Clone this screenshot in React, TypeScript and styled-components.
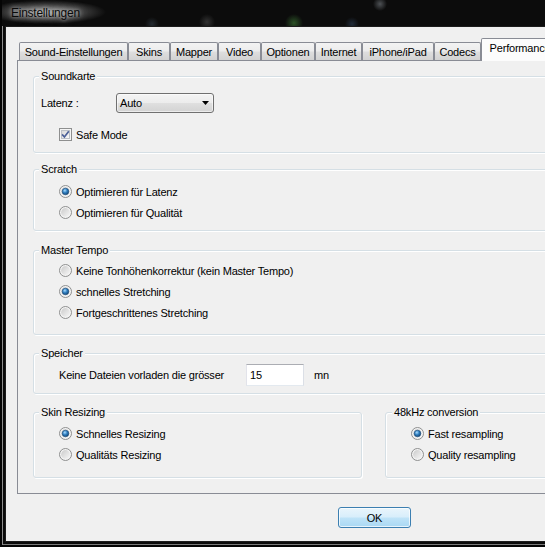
import { useId } from "react";
import styled, { createGlobalStyle } from "styled-components";

const GlobalStyle = createGlobalStyle`
  html, body {
    margin: 0;
    padding: 0;
    background: #000;
    overflow: hidden;
  }
  body {
    font-family: "Liberation Sans", Arial, sans-serif;
    font-size: 11px;
    letter-spacing: -0.2px;
    color: #000;
  }
`;

const Window = styled.div`
  box-sizing: border-box;
  width: 600px;
  height: 547px;
  display: flex;
  flex-direction: column;
  padding: 0 3px 3px;
  border: 2px solid #050505;
  border-top: none;
  background: #0b0b0b;
  box-shadow: inset 1px 0 0 #8d8d8d, inset 0 -1px 0 #7a7a7a;
`;

const TitleBar = styled.div`
  height: 25px;
  flex-shrink: 0;
  display: flex;
  align-items: center;
  padding: 0 0 1px 3px;
  margin: 0 -3px;
  background:
    radial-gradient(ellipse 60px 12px at 44px 12px, rgba(175, 175, 175, 0.9), rgba(110, 110, 110, 0.45) 65%, transparent 100%),
    radial-gradient(circle at 292px 23px, rgba(70, 140, 60, 0.55), transparent 9px),
    radial-gradient(circle at 205px 22px, rgba(120, 120, 120, 0.35), transparent 8px),
    radial-gradient(circle at 378px 4px, rgba(200, 210, 220, 0.35), transparent 7px),
    radial-gradient(circle at 150px 24px, rgba(90, 110, 130, 0.3), transparent 7px),
    radial-gradient(circle at 350px 24px, rgba(70, 100, 140, 0.35), transparent 7px),
    #0c0c0c;
`;

const Title = styled.span`
  padding-left: 6px;
  font-size: 12px;
  letter-spacing: -0.25px;
  color: #0a0a0a;
  text-shadow: 0 0 4px rgba(230, 230, 230, 0.8), 0 0 8px rgba(200, 200, 200, 0.6);
`;

const Client = styled.div`
  flex: 1;
  display: flex;
  flex-direction: column;
  min-height: 0;
  background: #f0f0f0;
  border: 1px solid #1c1c1c;
  padding: 11px 11px 0;
`;

const TabRow = styled.div`
  display: flex;
  align-items: flex-start;
  height: 23px;
  padding-left: 2px;
  position: relative;
  z-index: 1;
`;

const Tab = styled.div<{ $active?: boolean; $w: number }>`
  box-sizing: border-box;
  flex-shrink: 0;
  width: ${(p) => p.$w}px;
  height: ${(p) => (p.$active ? 23 : 18)}px;
  margin-top: ${(p) => (p.$active ? 0 : 4)}px;
  padding-bottom: ${(p) => (p.$active ? 4 : 0)}px;
  display: flex;
  align-items: center;
  justify-content: center;
  white-space: nowrap;
  border: 1px solid #898c95;
  border-bottom: none;
  border-radius: 2px 2px 0 0;
  background: ${(p) =>
    p.$active
      ? "#fcfcfc"
      : "linear-gradient(#f3f3f3 0%, #ececec 48%, #dedede 52%, #d2d2d2 100%)"};
`;

const Panel = styled.div`
  margin-top: -1px;
  border: 1px solid #898c95;
  background: #f0f0f0;
  padding: 15px 15px 15px;
  display: flex;
  flex-direction: column;
`;

const Group = styled.div<{ $h: number; $mt?: number }>`
  box-sizing: border-box;
  height: ${(p) => p.$h}px;
  margin-top: ${(p) => p.$mt ?? 0}px;
  border: 1px solid #d5dfe5;
  border-radius: 3px;
  box-shadow: inset 1px 1px 0 #fff, 1px 1px 0 #fff;
  display: flex;
  flex-direction: column;
  align-items: flex-start;
`;

const Legend = styled.span<{ $ml?: number }>`
  margin: -7px 0 0 ${(p) => p.$ml ?? 5}px;
  padding: 0 2px;
  line-height: 13px;
  background: #f0f0f0;
`;

const GroupRow = styled.div<{ $mt: number }>`
  display: grid;
  grid-template-columns: 329px 1fr;
  column-gap: 23px;
  margin-top: ${(p) => p.$mt}px;
`;

const OptionList = styled.div<{ $pt: number }>`
  display: flex;
  flex-direction: column;
  padding: ${(p) => p.$pt}px 0 0 25px;
`;

const OptionRow = styled.div`
  display: flex;
  align-items: center;
  gap: 4px;
  height: 21px;
  white-space: nowrap;
`;

const FieldRow = styled.div<{ $mt: number; $pl: number; $h: number }>`
  display: flex;
  align-items: center;
  gap: ${(p) => (p.$pl === 25 && p.$h === 21 ? 4 : 0)}px;
  height: ${(p) => p.$h}px;
  margin-top: ${(p) => p.$mt}px;
  padding-left: ${(p) => p.$pl}px;
  white-space: nowrap;
`;

const FieldLabel = styled.span<{ $w: number }>`
  width: ${(p) => p.$w}px;
  overflow: hidden;
  flex-shrink: 0;
`;

const Combo = styled.div`
  box-sizing: border-box;
  width: 98px;
  height: 20px;
  display: flex;
  align-items: center;
  justify-content: space-between;
  padding: 0 4px 0 3px;
  border: 1px solid #707070;
  border-radius: 3px;
  background: linear-gradient(#f4f4f4 0%, #ececec 50%, #dfdfdf 52%, #d3d3d3 100%);
  box-shadow: inset 0 0 0 1px rgba(255, 255, 255, 0.55);
`;

const TextBox = styled.div`
  box-sizing: border-box;
  width: 58px;
  height: 22px;
  margin-left: 21px;
  padding-left: 3px;
  display: flex;
  align-items: center;
  background: #fff;
  border: 1px solid;
  border-color: #abadb3 #dbdfe6 #e3e9ef #e2e3ea;
`;

const Unit = styled.span`
  margin-left: 10px;
`;

const Footer = styled.div`
  display: flex;
  padding: 13px 0 0 321px;
`;

const Button = styled.div`
  box-sizing: border-box;
  width: 73px;
  height: 21px;
  display: flex;
  align-items: center;
  justify-content: center;
  border: 1px solid #3c7fb1;
  border-radius: 3px;
  background: linear-gradient(#e9f5fc 0%, #d8eefb 48%, #bfe3f8 52%, #a9d8f3 100%);
  box-shadow: inset 0 0 0 1px rgba(255, 255, 255, 0.7);
`;

function Radio({ checked }: { checked?: boolean }) {
  const id = useId();
  return (
    <svg width="13" height="13" viewBox="0 0 13 13">
      <defs>
        <linearGradient id={`${id}in`} x1="0" y1="0" x2="1" y2="1">
          <stop offset="0" stopColor="#cbcbcb" />
          <stop offset="1" stopColor="#f7f7f7" />
        </linearGradient>
        <radialGradient id={`${id}dot`} cx="0.4" cy="0.35" r="0.75">
          <stop offset="0" stopColor="#a9dcff" />
          <stop offset="0.45" stopColor="#2f7ec0" />
          <stop offset="1" stopColor="#0d3a66" />
        </radialGradient>
      </defs>
      <circle cx="6.5" cy="6.5" r="6" fill="#f3f3f3" stroke="#8e8f8f" />
      <circle cx="6.5" cy="6.5" r="4.4" fill={`url(#${id}in)`} />
      {checked && (
        <circle cx="6.5" cy="6.5" r="3.3" fill={`url(#${id}dot)`} stroke="#1b4a77" strokeWidth="0.6" />
      )}
    </svg>
  );
}

function Checkbox() {
  const id = useId();
  return (
    <svg width="13" height="13" viewBox="0 0 13 13">
      <defs>
        <linearGradient id={id} x1="0" y1="0" x2="1" y2="1">
          <stop offset="0" stopColor="#d6d6d6" />
          <stop offset="1" stopColor="#fbfbfb" />
        </linearGradient>
      </defs>
      <rect x="0.5" y="0.5" width="12" height="12" fill="#f5f5f5" stroke="#8e8f8f" />
      <rect x="2.5" y="2.5" width="8" height="8" fill={`url(#${id})`} stroke="#bcc1c7" />
      <path d="M3.1 6.4 L5.4 9 L9.8 3.2" fill="none" stroke="#4a5f97" strokeWidth="1.7" />
    </svg>
  );
}

function ComboArrow() {
  return (
    <svg width="7" height="4" viewBox="0 0 7 4">
      <path d="M0 0 H7 L3.5 4 Z" fill="#000" />
    </svg>
  );
}

const tabs = [
  { label: "Sound-Einstellungen", w: 109 },
  { label: "Skins", w: 42 },
  { label: "Mapper", w: 48 },
  { label: "Video", w: 43 },
  { label: "Optionen", w: 54 },
  { label: "Internet", w: 47 },
  { label: "iPhone/iPad", w: 72 },
  { label: "Codecs", w: 47 },
  { label: "Performance", w: 78, active: true },
];

type Option = { label: string; checked?: boolean };

function Options({ items, pt }: { items: Option[]; pt: number }) {
  return (
    <OptionList $pt={pt}>
      {items.map((o) => (
        <OptionRow key={o.label}>
          <Radio checked={o.checked} />
          <span>{o.label}</span>
        </OptionRow>
      ))}
    </OptionList>
  );
}

export default function App() {
  return (
    <>
      <GlobalStyle />
      <Window>
        <TitleBar>
          <Title>Einstellungen</Title>
        </TitleBar>
        <Client>
          <TabRow>
            {tabs.map((t) => (
              <Tab key={t.label} $w={t.w} $active={t.active}>
                {t.label}
              </Tab>
            ))}
          </TabRow>
          <Panel>
            <Group $h={77}>
              <Legend>Soundkarte</Legend>
              <FieldRow $mt={10} $pl={7} $h={20}>
                <FieldLabel $w={75}>Latenz :</FieldLabel>
                <Combo>
                  <span>Auto</span>
                  <ComboArrow />
                </Combo>
              </FieldRow>
              <FieldRow $mt={11} $pl={25} $h={21}>
                <Checkbox />
                <span>Safe Mode</span>
              </FieldRow>
            </Group>

            <Group $h={62} $mt={16}>
              <Legend>Scratch</Legend>
              <Options
                pt={5}
                items={[
                  { label: "Optimieren für Latenz", checked: true },
                  { label: "Optimieren für Qualität" },
                ]}
              />
            </Group>

            <Group $h={85} $mt={19}>
              <Legend>Master Tempo</Legend>
              <Options
                pt={3}
                items={[
                  { label: "Keine Tonhöhenkorrektur (kein Master Tempo)" },
                  { label: "schnelles Stretching", checked: true },
                  { label: "Fortgeschrittenes Stretching" },
                ]}
              />
            </Group>

            <Group $h={41} $mt={18}>
              <Legend>Speicher</Legend>
              <FieldRow $mt={4} $pl={25} $h={22}>
                <FieldLabel $w={166}>Keine Dateien vorladen die grösser</FieldLabel>
                <TextBox>15</TextBox>
                <Unit>mn</Unit>
              </FieldRow>
            </Group>

            <GroupRow $mt={18}>
              <Group $h={66}>
                <Legend>Skin Resizing</Legend>
                <Options
                  pt={4}
                  items={[
                    { label: "Schnelles Resizing", checked: true },
                    { label: "Qualitäts Resizing" },
                  ]}
                />
              </Group>
              <Group $h={66}>
                <Legend $ml={6}>48kHz conversion</Legend>
                <Options
                  pt={4}
                  items={[
                    { label: "Fast resampling", checked: true },
                    { label: "Quality resampling" },
                  ]}
                />
              </Group>
            </GroupRow>
          </Panel>
          <Footer>
            <Button>OK</Button>
          </Footer>
        </Client>
      </Window>
    </>
  );
}
